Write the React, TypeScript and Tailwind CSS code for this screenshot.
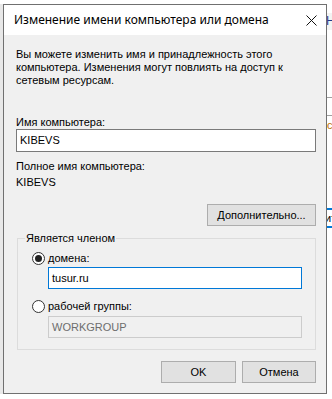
import React from "react";

const sans = { fontFamily: '"Liberation Sans", Arial, sans-serif' };

function Radio({ checked, label }: { checked?: boolean; label: string }) {
  return (
    <div className="flex items-center h-[13px] ml-[14px]">
      <span className="w-[13px] h-[13px] rounded-full border border-[#333333] bg-white flex items-center justify-center">
        {checked && <span className="w-[7px] h-[7px] rounded-full bg-[#222222]" />}
      </span>
      <span className="ml-[3px] leading-[13px]">{label}</span>
    </div>
  );
}

function Button({ children, className = "" }: { children: React.ReactNode; className?: string }) {
  return (
    <div
      className={
        "h-[22px] bg-[#e1e1e1] border border-[#adadad] flex items-center justify-center leading-[13px] " +
        className
      }
    >
      {children}
    </div>
  );
}

export default function App() {
  return (
    <div className="w-[332px] h-[399px] bg-white overflow-hidden text-[11px] text-black" style={sans}>
      <div className="flex items-start pt-[4px]">
        {/* window behind, left edge */}
        <div className="w-[3px] h-[390px] bg-[#e8e8e8]" />

        {/* dialog */}
        <div className="w-[324px] h-[390px] border border-[#707070] flex flex-col">
          <div className="h-[30px] bg-white flex items-center justify-between pl-[10px] pr-[9px]">
            <span
              className="text-[12px] leading-[16px] text-black"
              style={{ fontFamily: '"Segoe UI", "Noto Sans", sans-serif' }}
            >
              Изменение имени компьютера или домена
            </span>
            <svg width="11" height="11" viewBox="0 0 11 11" className="mt-[1px]">
              <path d="M0.5 0.5 L10.5 10.5 M10.5 0.5 L0.5 10.5" stroke="#111" strokeWidth="1" fill="none" />
            </svg>
          </div>

          <div className="flex-1 bg-[#f0f0f0] pl-[12px] pr-[10px] pt-[13px] flex flex-col">
            <p className="leading-[13px]">
              Вы можете изменить имя и принадлежность этого
              <br />
              компьютера. Изменения могут повлиять на доступ к
              <br />
              сетевым ресурсам.
            </p>

            <div className="mt-[29px] leading-[13px]">Имя компьютера:</div>
            <div className="h-[23px] bg-white border border-[#7a7a7a] flex items-center pl-[3px]">KIBEVS</div>

            <div className="mt-[8px] leading-[13px]">Полное имя компьютера:</div>
            <div className="mt-[3px] leading-[13px]">KIBEVS</div>

            <div className="mt-[15px] flex justify-end">
              <Button className="w-[109px]">Дополнительно...</Button>
            </div>

            <fieldset className="mt-[6px] ml-[1px] border border-[#dcdcdc] pb-[11px]">
              <legend className="ml-[7px] px-[1px] leading-[13px]">Является членом</legend>
              <div className="mt-[7px]">
                <Radio checked label="домена:" />
              </div>
              <div className="mt-[2px] ml-[30px] mr-[13px] h-[22px] bg-white border border-[#0078d7] flex items-center pl-[3px]">
                tusur.ru
              </div>
              <div className="mt-[11px]">
                <Radio label="рабочей группы:" />
              </div>
              <div className="mt-[3px] ml-[30px] mr-[13px] h-[22px] bg-[#f0f0f0] border border-[#cccccc] flex items-center pl-[3px] text-[#6d6d6d]">
                WORKGROUP
              </div>
            </fieldset>

            <div className="mt-[11px] flex justify-end gap-[6px]">
              <Button className="w-[75px]">OK</Button>
              <Button className="w-[74px]">Отмена</Button>
            </div>
          </div>
        </div>

        {/* window behind, right edge */}
        <div className="w-[5px] h-[390px] flex flex-col overflow-hidden">
          <div className="mt-[9px] h-[17px] bg-[#f3f3f3] flex items-center overflow-hidden">
            <span className="text-[12px] leading-[13px] text-[#1f3a8a] -ml-[1px]">Н</span>
          </div>
          <div className="mt-[67px] h-[1px] bg-[#a0a0a0]" />
          <div className="mt-[17px] h-[1px] bg-[#a0a0a0]" />
          <div className="mt-[5px] leading-[8px] text-[#c07000] overflow-hidden">с</div>
          <div className="mt-[79px] h-[20px] border-y-2 border-[#0078d7] flex items-center overflow-hidden">
            <span className="leading-[13px] -ml-[2px]">ит</span>
          </div>
        </div>
      </div>
    </div>
  );
}
